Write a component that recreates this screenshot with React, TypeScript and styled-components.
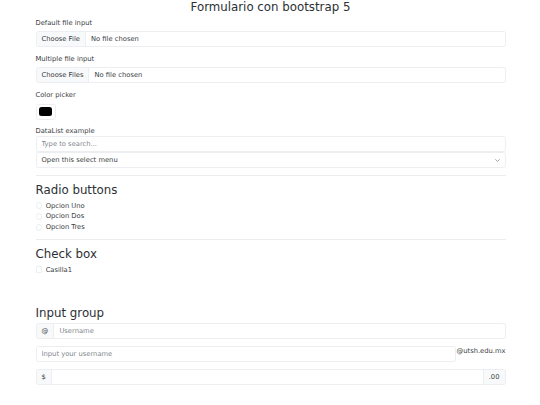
import * as React from 'react';
import styled, { createGlobalStyle } from 'styled-components';

// the page is a bootstrap 5 form seen at 1280px wide, shrunk to 540px
const GlobalStyle = createGlobalStyle`
  html, body {
    margin: 0;
    padding: 0;
    background: #fff;
  }
  body {
    font-family: "DejaVu Sans", "Noto Sans", sans-serif;
    font-size: 6.75px;
    line-height: 10.125px;
    color: #3a3e42;
  }
  * { box-sizing: border-box; }
`;

const Container = styled.div`
  width: 471px;
  margin: 0 auto;
  padding-left: 1px;
`;

const Title = styled.h3`
  margin: 0 0 3.4px;
  font-size: 11.8px;
  line-height: 14.18px;
  font-weight: 500;
  text-align: center;
  color: #2c3034;
`;

const SectionTitle = styled.h3<{ $gap?: number }>`
  margin: ${p => p.$gap || 0}px 0 3.4px;
  font-size: 11.8px;
  line-height: 14.18px;
  font-weight: 500;
  color: #2c3034;
`;

const Field = styled.div<{ $tight?: boolean }>`
  margin-bottom: ${p => (p.$tight ? 0 : 6.75)}px;
`;

const Label = styled.label<{ $bare?: boolean }>`
  display: block;
  margin-bottom: ${p => (p.$bare ? 0 : 3.375)}px;
  line-height: 10.125px;
`;

const FileControl = styled.div`
  display: flex;
  align-items: stretch;
  height: 16px;
  border: 1px solid #eceef1;
  border-radius: 2.5px;
  overflow: hidden;
  background: #fff;
`;

const FileButton = styled.span`
  display: flex;
  align-items: center;
  padding: 0 5.06px;
  background: #f8f9fa;
  border-right: 1px solid #eceef1;
  white-space: nowrap;
`;

const FileName = styled.span`
  display: flex;
  align-items: center;
  padding-left: 5.06px;
`;

const ColorControl = styled.div`
  width: 20.25px;
  height: 16px;
  padding: 2.53px;
  border: 1px solid #eceef1;
  border-radius: 2.5px;
`;

const Swatch = styled.div<{ $color: string }>`
  width: 100%;
  height: 100%;
  border-radius: 2.5px;
  background: ${p => p.$color};
`;

const TextInput = styled.input<{ $joinLeft?: boolean; $joinRight?: boolean }>`
  display: block;
  width: 100%;
  min-width: 0;
  flex: 1 1 auto;
  height: 16px;
  margin: 0;
  padding: 0 5.06px;
  font-family: inherit;
  font-size: 6.75px;
  color: #3a3e42;
  background: #fff;
  border: 1px solid #eceef1;
  border-radius: ${p =>
    `${p.$joinLeft ? 0 : 2.5}px ${p.$joinRight ? 0 : 2.5}px ${p.$joinRight ? 0 : 2.5}px ${p.$joinLeft ? 0 : 2.5}px`};
  ${p => (p.$joinLeft ? 'margin-left: -1px;' : '')}
  outline: none;
  &::placeholder {
    color: #82878c;
  }
`;

const Select = styled.div`
  display: flex;
  align-items: center;
  justify-content: space-between;
  height: 16px;
  padding: 0 5px 0 5.06px;
  border: 1px solid #eceef1;
  border-radius: 2.5px;
`;

const Divider = styled.hr`
  margin: 6.75px 0;
  border: 0;
  border-top: 1px solid #ececed;
`;

const Check = styled.div`
  display: flex;
  align-items: flex-start;
  min-height: 10.125px;
  margin-bottom: 0.84px;
`;

const Mark = styled.span<{ $round?: boolean }>`
  flex: none;
  width: 6.75px;
  height: 6.75px;
  margin-top: 1.69px;
  margin-right: 3.375px;
  border: 1px solid #eceef1;
  border-radius: ${p => (p.$round ? '50%' : '1.1px')};
`;

const InputGroup = styled.div`
  display: flex;
  align-items: stretch;
  margin-bottom: 6.75px;
`;

const Addon = styled.span<{ $side: 'left' | 'right' }>`
  display: flex;
  align-items: center;
  height: 16px;
  padding: 0 5.06px;
  background: #f8f9fa;
  border: 1px solid #eceef1;
  border-radius: ${p => (p.$side === 'left' ? '2.5px 0 0 2.5px' : '0 2.5px 2.5px 0')};
  ${p => (p.$side === 'right' ? 'margin-left: -1px;' : '')}
  white-space: nowrap;
`;

const PlainText = styled.span`
  flex: none;
  line-height: 10.125px;
  white-space: nowrap;
`;

const Chevron = () => (
  <svg width="5" height="5" viewBox="0 0 16 16" fill="none">
    <path d="M2 5l6 6 6-6" stroke="#6b7075" strokeWidth="2" strokeLinecap="round" strokeLinejoin="round" />
  </svg>
);

export default function App() {
  return (
    <>
      <GlobalStyle />
      <Container>
        <Title>Formulario con bootstrap 5</Title>

        <Field>
          <Label>Default file input</Label>
          <FileControl>
            <FileButton>Choose File</FileButton>
            <FileName>No file chosen</FileName>
          </FileControl>
        </Field>

        <Field>
          <Label>Multiple file input</Label>
          <FileControl>
            <FileButton>Choose Files</FileButton>
            <FileName>No file chosen</FileName>
          </FileControl>
        </Field>

        <Field>
          <Label>Color picker</Label>
          <ColorControl>
            <Swatch $color="#000" />
          </ColorControl>
        </Field>

        <Field $tight>
          <Label $bare>DataList example</Label>
          <TextInput placeholder="Type to search..." />
          <Select>
            <span>Open this select menu</span>
            <Chevron />
          </Select>
        </Field>

        <Divider />

        <SectionTitle>Radio buttons</SectionTitle>
        {['Opcion Uno', 'Opcion Dos', 'Opcion Tres'].map(o => (
          <Check key={o}>
            <Mark $round />
            <span>{o}</span>
          </Check>
        ))}

        <Divider />

        <SectionTitle>Check box</SectionTitle>
        <Check>
          <Mark />
          <span>Casilla1</span>
        </Check>

        <SectionTitle $gap={30.8}>Input group</SectionTitle>
        <InputGroup>
          <Addon $side="left">@</Addon>
          <TextInput $joinLeft placeholder="Username" />
        </InputGroup>

        <InputGroup>
          <TextInput placeholder="Input your username" />
          <PlainText>@utsh.edu.mx</PlainText>
        </InputGroup>

        <InputGroup>
          <Addon $side="left">$</Addon>
          <TextInput $joinLeft $joinRight />
          <Addon $side="right">.00</Addon>
        </InputGroup>
      </Container>
    </>
  );
}
